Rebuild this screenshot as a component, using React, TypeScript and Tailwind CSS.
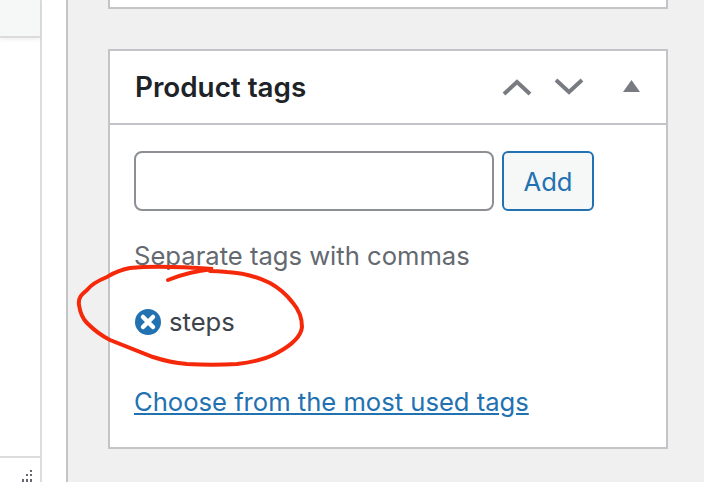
export default function App() {
  return (
    <div className="relative flex h-[482px] w-[704px] overflow-hidden bg-[#f0f0f1] font-['Inter',sans-serif]">
      <div className="flex h-full w-[42px] flex-col border-r-2 border-[#dcdcde] bg-white">
        <div className="h-[38px] border-b-2 border-[#dcdcde] bg-[#f6f7f7] shadow-[0_2px_3px_rgba(0,0,0,0.06)]" />
        <div className="flex-1" />
        <div className="relative h-[26px] border-t-2 border-[#dcdcde]">
          <svg className="absolute bottom-0 right-[6px]" width="12" height="12" viewBox="0 0 12 12" fill="#646970">
            <rect x="8" y="0" width="2" height="2" />
            <rect x="4" y="4" width="2" height="2" />
            <rect x="8" y="4" width="2" height="2" />
            <rect x="0" y="9" width="2" height="3" />
            <rect x="4" y="9" width="2" height="3" />
            <rect x="8" y="9" width="2" height="3" />
          </svg>
        </div>
      </div>
      <div className="h-full w-[24px] bg-white" />
      <div className="flex h-full flex-1 flex-col border-l-2 border-[#c3c4c7] pl-[40px] pr-[36px]">
        <div className="h-[9px] border-x-2 border-b-2 border-[#c3c4c7] bg-white" />
        <div className="mt-[40px] h-[400px] border-2 border-[#c3c4c7] bg-white">
          <div className="flex h-[74px] items-center border-b-2 border-[#c3c4c7] pl-[25px] pr-[26px]">
            <h2 className="flex-1 pt-[2px] text-[27.8px] font-semibold leading-none text-[#1d2327]">Product tags</h2>
            <svg width="30" height="18" viewBox="0 0 30 18" fill="none" stroke="#787c82" strokeWidth="4">
              <path d="M2 16 L15 4 L28 16" />
            </svg>
            <svg className="ml-[22px]" width="30" height="18" viewBox="0 0 30 18" fill="none" stroke="#787c82" strokeWidth="4">
              <path d="M2 2 L15 14 L28 2" />
            </svg>
            <svg className="ml-[39px] mb-[2px]" width="17" height="12" viewBox="0 0 17 12" fill="#787c82">
              <path d="M8.5 0 L17 12 L0 12 Z" />
            </svg>
          </div>
          <div className="pl-[24px] pt-[26px]">
            <div className="flex gap-[8px]">
              <input className="h-[60px] w-[360px] rounded-[8px] border-2 border-[#8c8f94] bg-white" />
              <button className="h-[60px] w-[92px] rounded-[6px] border-2 border-[#2271b1] bg-[#f6f7f7] pt-[2px] text-[25.6px] text-[#2271b1]">Add</button>
            </div>
            <p className="mt-[27px] text-[25.6px] leading-[36px] text-[#646970]">Separate tags with commas</p>
            <div className="mt-[30px] flex items-center gap-[7px]">
              <svg width="28" height="28" viewBox="0 0 28 28">
                <circle cx="14" cy="14" r="13" fill="#2271b1" />
                <path d="M9 9 L19 19 M19 9 L9 19" stroke="#fff" strokeWidth="4.5" strokeLinecap="round" />
              </svg>
              <span className="text-[25.6px] leading-[36px] text-[#3c434a]">steps</span>
            </div>
            <a href="#" className="mt-[44px] block text-[25.6px] leading-[36px] text-[#2271b1] underline">Choose from the most used tags</a>
          </div>
        </div>
      </div>
      <svg className="pointer-events-none absolute left-0 top-0" width="704" height="482" viewBox="0 0 704 482" fill="none">
        <path
          d="M168 280 C180 275 195 271 213 269 C185 267 150 266 130 268 C118 270 112 274 107 277 C97 281 91 285 87 290 C81 295 78 298 79 305 C80 312 82 318 87 323 C94 330 100 335 110 340 C125 346 140 352 153 357 C165 361 175 363 187 364 C205 365 220 365 237 364 C255 362 268 358 277 353 C290 346 301 337 302 327 C302 318 299 310 293 303 C287 295 279 288 270 283 C258 277 243 273 227 272 C222 271.5 216 271 210 271"
          stroke="#f5280a"
          strokeWidth="4"
          strokeLinecap="round"
        />
      </svg>
    </div>
  );
}
